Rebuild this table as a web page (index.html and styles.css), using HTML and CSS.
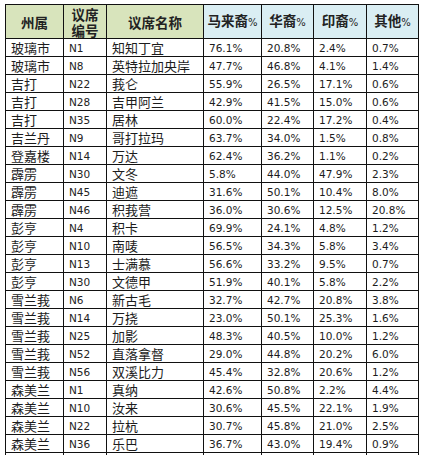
FILE: index.html
```html
<!DOCTYPE html>
<html lang="zh">
  <head>
    <meta charset="UTF-8" />
    <meta name="viewport" content="width=device-width, initial-scale=1.0" />
    <title>议席族群比例</title>
    <link rel="stylesheet" href="styles.css">
  </head>
  <body>
    <table class="tabla">
      <colgroup>
        <col class="c-estado">
        <col class="c-num">
        <col class="c-nombre">
        <col class="c-pct">
        <col class="c-pct2">
        <col class="c-pct3">
        <col class="c-pct2">
      </colgroup>
      <thead>
        <tr>
          <th class="verde">州属</th>
          <th class="verde">议席<br>编号</th>
          <th class="verde">议席名称</th>
          <th class="azul">马来裔<span>%</span></th>
          <th class="azul">华裔<span>%</span></th>
          <th class="azul">印裔<span>%</span></th>
          <th class="azul">其他<span>%</span></th>
        </tr>
      </thead>
      <tbody>
        <tr><td>玻璃市</td><td class="n">N1</td><td>知知丁宜</td><td class="p">76.1%</td><td class="p">20.8%</td><td class="p">2.4%</td><td class="p">0.7%</td></tr>
        <tr><td>玻璃市</td><td class="n">N8</td><td>英特拉加央岸</td><td class="p">47.7%</td><td class="p">46.8%</td><td class="p">4.1%</td><td class="p">1.4%</td></tr>
        <tr><td>吉打</td><td class="n">N22</td><td>莪仑</td><td class="p">55.9%</td><td class="p">26.5%</td><td class="p">17.1%</td><td class="p">0.6%</td></tr>
        <tr><td>吉打</td><td class="n">N28</td><td>吉甲阿兰</td><td class="p">42.9%</td><td class="p">41.5%</td><td class="p">15.0%</td><td class="p">0.6%</td></tr>
        <tr><td>吉打</td><td class="n">N35</td><td>居林</td><td class="p">60.0%</td><td class="p">22.4%</td><td class="p">17.2%</td><td class="p">0.4%</td></tr>
        <tr><td>吉兰丹</td><td class="n">N9</td><td>哥打拉玛</td><td class="p">63.7%</td><td class="p">34.0%</td><td class="p">1.5%</td><td class="p">0.8%</td></tr>
        <tr><td>登嘉楼</td><td class="n">N14</td><td>万达</td><td class="p">62.4%</td><td class="p">36.2%</td><td class="p">1.1%</td><td class="p">0.2%</td></tr>
        <tr><td>霹雳</td><td class="n">N30</td><td>文冬</td><td class="p">5.8%</td><td class="p">44.0%</td><td class="p">47.9%</td><td class="p">2.3%</td></tr>
        <tr><td>霹雳</td><td class="n">N45</td><td>迪遮</td><td class="p">31.6%</td><td class="p">50.1%</td><td class="p">10.4%</td><td class="p">8.0%</td></tr>
        <tr><td>霹雳</td><td class="n">N46</td><td>积莪营</td><td class="p">36.0%</td><td class="p">30.6%</td><td class="p">12.5%</td><td class="p">20.8%</td></tr>
        <tr><td>彭亨</td><td class="n">N4</td><td>积卡</td><td class="p">69.9%</td><td class="p">24.1%</td><td class="p">4.8%</td><td class="p">1.2%</td></tr>
        <tr><td>彭亨</td><td class="n">N10</td><td>南唛</td><td class="p">56.5%</td><td class="p">34.3%</td><td class="p">5.8%</td><td class="p">3.4%</td></tr>
        <tr><td>彭亨</td><td class="n">N13</td><td>士满慕</td><td class="p">56.6%</td><td class="p">33.2%</td><td class="p">9.5%</td><td class="p">0.7%</td></tr>
        <tr><td>彭亨</td><td class="n">N30</td><td>文德甲</td><td class="p">51.9%</td><td class="p">40.1%</td><td class="p">5.8%</td><td class="p">2.2%</td></tr>
        <tr><td>雪兰莪</td><td class="n">N6</td><td>新古毛</td><td class="p">32.7%</td><td class="p">42.7%</td><td class="p">20.8%</td><td class="p">3.8%</td></tr>
        <tr><td>雪兰莪</td><td class="n">N14</td><td>万挠</td><td class="p">23.0%</td><td class="p">50.1%</td><td class="p">25.3%</td><td class="p">1.6%</td></tr>
        <tr><td>雪兰莪</td><td class="n">N25</td><td>加影</td><td class="p">48.3%</td><td class="p">40.5%</td><td class="p">10.0%</td><td class="p">1.2%</td></tr>
        <tr><td>雪兰莪</td><td class="n">N52</td><td>直落拿督</td><td class="p">29.0%</td><td class="p">44.8%</td><td class="p">20.2%</td><td class="p">6.0%</td></tr>
        <tr><td>雪兰莪</td><td class="n">N56</td><td>双溪比力</td><td class="p">45.4%</td><td class="p">32.8%</td><td class="p">20.6%</td><td class="p">1.2%</td></tr>
        <tr><td>森美兰</td><td class="n">N1</td><td>真纳</td><td class="p">42.6%</td><td class="p">50.8%</td><td class="p">2.2%</td><td class="p">4.4%</td></tr>
        <tr><td>森美兰</td><td class="n">N10</td><td>汝来</td><td class="p">30.6%</td><td class="p">45.5%</td><td class="p">22.1%</td><td class="p">1.9%</td></tr>
        <tr><td>森美兰</td><td class="n">N22</td><td>拉杭</td><td class="p">30.7%</td><td class="p">45.8%</td><td class="p">21.0%</td><td class="p">2.5%</td></tr>
        <tr><td>森美兰</td><td class="n">N36</td><td>乐巴</td><td class="p">36.7%</td><td class="p">43.0%</td><td class="p">19.4%</td><td class="p">0.9%</td></tr>
        <tr><td>马六甲</td><td class="n">N17</td><td>马樟</td><td class="p">50.2%</td><td class="p">40.3%</td><td class="p">8.1%</td><td class="p">1.4%</td></tr>
      </tbody>
    </table>
  </body>
</html>
```

FILE: styles.css
```css
/* Tabla estilo hoja de cálculo: bordes negros de 1px y cabecera en dos colores */
body {
  margin: 4px 0 0 5px;
  background: #fff;
  color: #1c1c1c;
}

.tabla {
  border-collapse: collapse;
  table-layout: fixed;
  width: 414px;
  font-family: "Noto Sans CJK SC", sans-serif;
  font-size: 13px;
}

.c-estado { width: 58px; }
.c-num { width: 43px; }
.c-nombre { width: 97px; }
.c-pct { width: 58px; }
.c-pct2 { width: 52px; }
.c-pct3 { width: 53px; }

.tabla th,
.tabla td {
  border: 1px solid #111;
  padding: 0 0 0 5px;
  text-align: left;
  white-space: nowrap;
  overflow: hidden;
}

.tabla thead tr {
  height: 34px;
}

.tabla th {
  text-align: center;
  padding: 0;
  font-weight: bold;
  font-size: 13.5px;
  line-height: 16px;
  color: #222;
}

.tabla th span {
  font-family: "DejaVu Sans", sans-serif;
  font-weight: normal;
  font-size: 10px;
}

.verde { background: #d8e4bc; }
.azul { background: #daeef3; }

.tabla tbody tr {
  height: 18px;
}

.tabla td {
  line-height: 16px;
}

/* Números: fuente tipo Verdana, más pequeña */
.tabla td.n,
.tabla td.p {
  font-family: "DejaVu Sans", sans-serif;
  font-size: 10.5px;
}

.tabla td.n {
  color: #222;
}
```
